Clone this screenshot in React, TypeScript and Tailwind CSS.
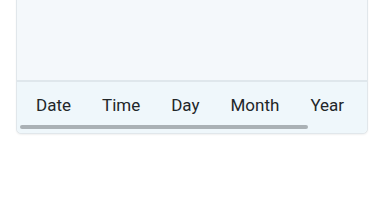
import React from 'react';

const tabs = ['Date', 'Time', 'Day', 'Month', 'Year'];

export default function App() {
  return (
    <div className="w-[384px] h-[216px] bg-white overflow-hidden font-['Roboto',sans-serif]">
      <div className="mx-4 -mt-2 w-[352px] rounded-b-[5px] border border-[#e1e7eb] bg-[#f4f8fb] shadow-[0_1px_2px_rgba(0,0,0,0.06)]">
        <div className="h-[87px]" />
        <div className="border-t-2 border-[#dfe7ec] bg-[#eff7fb] px-[3px] rounded-b-[5px]">
          <div className="flex pl-[0.5px] pt-[13px] text-[17px] leading-5 text-[#222629]">
            {tabs.map((t) => (
              <div key={t} className="px-[15.5px]">
                {t}
              </div>
            ))}
          </div>
          <div className="pt-[10px] pb-[4px]">
            <div className="h-[4px] w-[288px] rounded-full bg-[#aab1b5]" />
          </div>
        </div>
      </div>
    </div>
  );
}
